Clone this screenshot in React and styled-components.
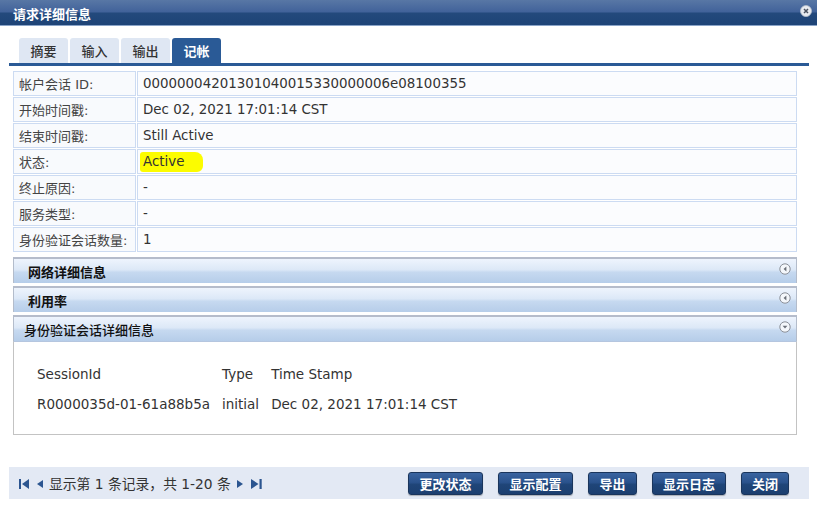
import React from "react";
import styled, { createGlobalStyle } from "styled-components";

const Global = createGlobalStyle`
  html, body { margin: 0; padding: 0; background: #ffffff; }
  body { font-family: "DejaVu Sans", "Noto Sans CJK SC", sans-serif; font-size: 13px; color: #333; }
`;

const CJK = `"DejaVu Sans", "Noto Sans CJK SC", sans-serif`;

const Dialog = styled.div`
  width: 817px;
  height: 507px;
  display: flex;
  flex-direction: column;
  background: #fff;
`;

const TitleBar = styled.div`
  height: 25px;
  border-bottom: 1px solid #8aa4c8;
  background: linear-gradient(#5877a5 0%, #41629a 48%, #23497c 52%, #1e4477 100%);
  display: flex;
  align-items: center;
  justify-content: space-between;
  padding: 0 5px 0 13px;
`;

const Title = styled.div`
  color: #fff;
  font-family: ${CJK};
  font-weight: bold;
  font-size: 13px;
  margin-top: 1px;
`;

const CloseIcon = styled.svg`
  width: 12px;
  height: 12px;
  margin-top: -4px;
`;

const Body = styled.div`
  padding: 12px 8px 0 9px;
  display: flex;
  flex-direction: column;
`;

const TabStrip = styled.div`
  display: flex;
  gap: 2px;
  padding-left: 10px;
  border-bottom: 3px solid #2a5a96;
`;

const Tab = styled.div`
  width: 49px;
  height: 25px;
  display: flex;
  align-items: center;
  justify-content: center;
  border-radius: 3px 3px 0 0;
  font-family: ${CJK};
  font-size: 13px;
  font-weight: ${(p) => (p.$active ? "bold" : "500")};
  color: ${(p) => (p.$active ? "#fff" : "#333")};
  background: ${(p) => (p.$active ? "#2a5a96" : "#dfe7f3")};
`;

const Content = styled.div`
  padding: 4px 3px 0 3px;
  display: flex;
  flex-direction: column;
`;

const InfoTable = styled.table`
  width: 786px;
  border-collapse: separate;
  border-spacing: 1px;
`;

const Cell = styled.td`
  height: 23px;
  padding: 0 0 0 5px;
  border: 1px solid #ccdbf2;
  background: ${(p) => (p.$label ? "#f8fafd" : "#fbfcfe")};
  color: ${(p) => (p.$label ? "#444" : "#333")};
  font-family: ${CJK};
  font-size: ${(p) => (p.$label ? "13px" : "13.4px")};
  width: ${(p) => (p.$label ? "116px" : "auto")};
  white-space: nowrap;
  vertical-align: middle;
`;

const Highlight = styled.span`
  display: inline-block;
  background: #fcfc00;
  padding: 3px 19px 3px 3px;
  margin-left: -3px;
  border-radius: 3px 8px 6px 3px;
  line-height: 14px;
`;

const SectionHeader = styled.div`
  box-sizing: border-box;
  height: 26px;
  width: 784px;
  margin: ${(p) => (p.$first ? "4px" : "3px")} 0 0 1px;
  border: 1px solid #b3bccb;
  border-top: 2px solid #b5bccb;
  border-bottom-width: 0;
  background: linear-gradient(#eef4fd 0%, #dce8f7 45%, #c6d9f0 55%, #b6cde9 100%);
  display: flex;
  align-items: center;
  justify-content: space-between;
  padding: 0 5px 0 ${(p) => (p.$plain ? "10px" : "14px")};
  font-family: ${CJK};
  font-size: 13px;
  font-weight: ${(p) => (p.$plain ? "500" : "bold")};
  color: #111;
`;

const ArrowIcon = styled.svg`
  width: 12px;
  height: 12px;
  margin-top: -5px;
`;

const SectionBody = styled.div`
  height: 94px;
  width: 784px;
  margin-left: 1px;
  border: 1px solid #c3c3c3;
  border-top: 1px solid #b5c6df;
  display: flex;
  align-items: flex-start;
  padding: 23px 0 0 23px;
  box-sizing: border-box;
`;

const SessionGrid = styled.div`
  display: grid;
  grid-template-columns: 173px auto auto;
  column-gap: 12px;
  row-gap: 12px;
  font-family: "DejaVu Sans", sans-serif;
  font-size: 13.5px;
  color: #333;
  line-height: 18px;
  white-space: nowrap;
`;

const Footer = styled.div`
  margin: auto 8px 8px 9px;
  height: 32px;
  background: #e3e9f4;
  display: flex;
  align-items: center;
  justify-content: space-between;
  padding: 0 20px 0 10px;
`;

const Pager = styled.div`
  display: flex;
  align-items: center;
  gap: 6px;
  font-family: ${CJK};
  font-size: 13.8px;
  color: #333;
`;

const PagerIcon = styled.svg`
  width: ${(p) => p.$w || 10}px;
  height: 10px;
  fill: #2b5590;
  margin: 1px ${(p) => p.$mr || 0}px 0 0;
`;

const Buttons = styled.div`
  display: flex;
  gap: 15px;
`;

const Button = styled.button`
  box-sizing: border-box;
  height: 23px;
  width: ${(p) => p.$w}px;
  padding: 0;
  border: 1px solid #1a355c;
  border-radius: 3px;
  background: linear-gradient(#3a64a0 0%, #2a528c 45%, #1f4578 55%, #1c3f70 100%);
  color: #fff;
  font-family: ${CJK};
  font-weight: bold;
  font-size: 13px;
  box-shadow: 0 1px 1px rgba(0,0,0,0.25);
  cursor: pointer;
`;

const rows = [
  ["帐户会话 ID:", "00000004201301040015330000006e08100355"],
  ["开始时间戳:", "Dec 02, 2021 17:01:14 CST"],
  ["结束时间戳:", "Still Active"],
  ["状态:", "__active__"],
  ["终止原因:", "-"],
  ["服务类型:", "-"],
  ["身份验证会话数量:", "1"],
];

function Arrow({ down }) {
  return (
    <ArrowIcon viewBox="0 0 12 12">
      <circle cx="6" cy="6" r="5.2" fill="#f4f7fb" stroke="#8a8f98" strokeWidth="1" />
      {down ? (
        <path d="M3.6 4.8 L8.4 4.8 L6 7.6 Z" fill="#6a6f78" />
      ) : (
        <path d="M7.4 3.6 L7.4 8.4 L4.6 6 Z" fill="#6a6f78" />
      )}
    </ArrowIcon>
  );
}

export default function App() {
  return (
    <Dialog>
      <Global />
      <TitleBar>
        <Title>请求详细信息</Title>
        <CloseIcon viewBox="0 0 12 12">
          <circle cx="6" cy="6" r="5.5" fill="#e8ebf0" stroke="#b8c0cc" strokeWidth="0.8" />
          <path d="M4 4 L8 8 M8 4 L4 8" stroke="#4a5260" strokeWidth="1.5" />
        </CloseIcon>
      </TitleBar>
      <Body>
        <TabStrip>
          <Tab>摘要</Tab>
          <Tab>输入</Tab>
          <Tab>输出</Tab>
          <Tab $active>记帐</Tab>
        </TabStrip>
        <Content>
          <InfoTable>
            <tbody>
              {rows.map(([k, v]) => (
                <tr key={k}>
                  <Cell $label>{k}</Cell>
                  <Cell>{v === "__active__" ? <Highlight>Active</Highlight> : v}</Cell>
                </tr>
              ))}
            </tbody>
          </InfoTable>
          <SectionHeader $first>
            <span>网络详细信息</span>
            <Arrow />
          </SectionHeader>
          <SectionHeader>
            <span>利用率</span>
            <Arrow />
          </SectionHeader>
          <SectionHeader $plain>
            <span>身份验证会话详细信息</span>
            <Arrow down />
          </SectionHeader>
          <SectionBody>
            <SessionGrid>
              <span>SessionId</span>
              <span>Type</span>
              <span>Time Stamp</span>
              <span>R0000035d-01-61a88b5a</span>
              <span>initial</span>
              <span>Dec 02, 2021 17:01:14 CST</span>
            </SessionGrid>
          </SectionBody>
        </Content>
      </Body>
      <Footer>
        <Pager>
          <PagerIcon viewBox="0 0 10 10" $mr={1}>
            <rect x="0" y="0" width="2" height="10" />
            <path d="M10 0 L10 10 L3 5 Z" />
          </PagerIcon>
          <PagerIcon $w={7} viewBox="0 0 7 10">
            <path d="M7 1 L7 9 L1 5 Z" />
          </PagerIcon>
          <span>显示第 1 条记录，共 1-20 条</span>
          <PagerIcon $w={7} viewBox="0 0 7 10" $mr={1}>
            <path d="M0 1 L0 9 L6 5 Z" />
          </PagerIcon>
          <PagerIcon $w={11} viewBox="0 0 11 10">
            <path d="M0 0 L0 10 L7.5 5 Z" />
            <rect x="8.5" y="0" width="2.2" height="10" />
          </PagerIcon>
        </Pager>
        <Buttons>
          <Button $w={75}>更改状态</Button>
          <Button $w={75}>显示配置</Button>
          <Button $w={49}>导出</Button>
          <Button $w={74}>显示日志</Button>
          <Button $w={48}>关闭</Button>
        </Buttons>
      </Footer>
    </Dialog>
  );
}
